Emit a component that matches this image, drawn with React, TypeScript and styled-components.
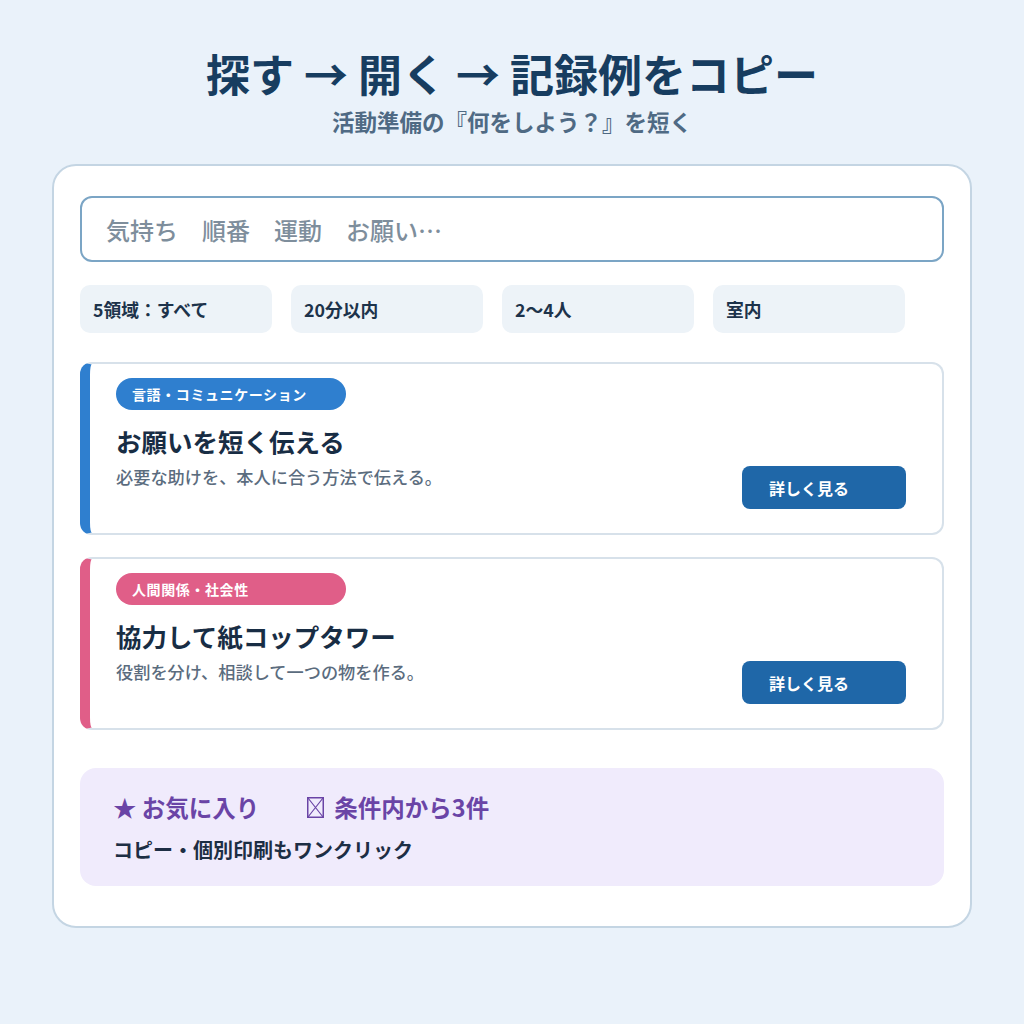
import React from "react";
import styled, { createGlobalStyle } from "styled-components";

const GlobalStyle = createGlobalStyle`
  html, body {
    margin: 0;
    padding: 0;
    background: #eaf2fa;
  }
  body {
    font-family: "Noto Sans CJK JP", "Noto Sans", sans-serif;
  }
`;

const Page = styled.div`
  width: 1024px;
  height: 1024px;
  box-sizing: border-box;
  padding-top: 45px;
  display: flex;
  flex-direction: column;
  align-items: center;
`;

const Title = styled.h1`
  margin: 0;
  font-size: 44px;
  line-height: 56px;
  font-weight: 700;
  color: #173d60;
`;

const Subtitle = styled.p`
  margin: 6px 0 0;
  font-size: 22.5px;
  line-height: 28px;
  font-weight: 700;
  color: #4f6a84;
`;

const Panel = styled.section`
  margin-top: 29px;
  width: 920px;
  height: 764px;
  box-sizing: border-box;
  background: #ffffff;
  border: 2px solid #c4d5e3;
  border-radius: 24px;
  padding: 30px 26px 0;
  display: flex;
  flex-direction: column;
`;

const Search = styled.div`
  height: 66px;
  box-sizing: border-box;
  border: 2.5px solid #7ba5c5;
  border-radius: 12px;
  padding: 0 24px;
  display: flex;
  align-items: center;
  gap: 24px;
  font-size: 24px;
  font-weight: 500;
  color: #7e8e9c;
`;

const Filters = styled.div`
  margin-top: 23px;
  display: grid;
  grid-template-columns: repeat(4, 192px);
  gap: 19px;
`;

const Chip = styled.div`
  height: 48px;
  border-radius: 10px;
  background: #edf3f8;
  display: flex;
  align-items: center;
  padding-left: 13px;
  font-size: 17.8px;
  font-weight: 700;
  color: #1d334b;
`;

const Cards = styled.div`
  margin-top: 29px;
  display: flex;
  flex-direction: column;
  gap: 22px;
`;

const Card = styled.article<{ accent: string }>`
  height: 173px;
  box-sizing: border-box;
  border: 2px solid #d7e1ea;
  border-left: 10px solid ${(p) => p.accent};
  border-radius: 12px;
  padding: 14px 36px 24px 26px;
  display: flex;
  align-items: flex-end;
`;

const CardBody = styled.div`
  align-self: flex-start;
  display: flex;
  flex-direction: column;
  align-items: flex-start;
`;

const Tag = styled.span<{ bg: string }>`
  width: 230px;
  height: 32px;
  box-sizing: border-box;
  border-radius: 16px;
  background: ${(p) => p.bg};
  color: #ffffff;
  font-size: 14px;
  font-weight: 700;
  letter-spacing: 0.6px;
  padding-left: 16px;
  display: flex;
  align-items: center;
`;

const CardTitle = styled.h2`
  margin: 13px 0 0;
  font-size: 25.5px;
  line-height: 36px;
  font-weight: 700;
  color: #182d44;
`;

const CardText = styled.p`
  margin: 5px 0 0;
  font-size: 17.2px;
  line-height: 26px;
  font-weight: 500;
  color: #5b6c7e;
`;

const MoreButton = styled.button`
  margin-left: auto;
  width: 164px;
  height: 43px;
  border: none;
  border-radius: 8px;
  background: #1f67a8;
  color: #ffffff;
  font-family: inherit;
  font-size: 16px;
  font-weight: 700;
  text-align: left;
  padding-left: 27px;
`;

const Promo = styled.div`
  margin-top: 38px;
  height: 118px;
  box-sizing: border-box;
  border-radius: 16px;
  background: #f0ebfc;
  padding: 23px 33px;
  display: flex;
  flex-direction: column;
  gap: 12px;
`;

const PromoRow = styled.div`
  display: flex;
  align-items: center;
  gap: 48px;
  font-size: 23.5px;
  line-height: 32px;
  font-weight: 700;
  color: #6a44a6;
`;

const PromoItem = styled.span`
  display: inline-flex;
  align-items: center;
  gap: 10px;
`;

const PromoNote = styled.div`
  font-size: 20px;
  line-height: 30px;
  font-weight: 700;
  color: #1d2e44;
`;

const BoxMark = () => (
  <svg width="17" height="21" viewBox="0 0 17 21" fill="none">
    <rect x="0.75" y="0.75" width="15.5" height="19.5" stroke="#6a44a6" strokeWidth="1.5" />
    <path d="M1 1L16 20M16 1L1 20" stroke="#6a44a6" strokeWidth="1.2" />
  </svg>
);

const activities = [
  {
    id: 1,
    tag: "言語・コミュニケーション",
    color: "#2f7fcf",
    title: "お願いを短く伝える",
    text: "必要な助けを、本人に合う方法で伝える。",
  },
  {
    id: 2,
    tag: "人間関係・社会性",
    color: "#e05e88",
    title: "協力して紙コップタワー",
    text: "役割を分け、相談して一つの物を作る。",
  },
];

const filters = ["5領域：すべて", "20分以内", "2〜4人", "室内"];

const App = () => {
  return (
    <Page>
      <GlobalStyle />
      <Title>探す → 開く → 記録例をコピー</Title>
      <Subtitle>活動準備の『何をしよう？』を短く</Subtitle>
      <Panel>
        <Search>
          <span>気持ち</span>
          <span>順番</span>
          <span>運動</span>
          <span>お願い…</span>
        </Search>
        <Filters>
          {filters.map((f) => (
            <Chip key={f}>{f}</Chip>
          ))}
        </Filters>
        <Cards>
          {activities.map((a) => (
            <Card key={a.id} accent={a.color}>
              <CardBody>
                <Tag bg={a.color}>{a.tag}</Tag>
                <CardTitle>{a.title}</CardTitle>
                <CardText>{a.text}</CardText>
              </CardBody>
              <MoreButton>詳しく見る</MoreButton>
            </Card>
          ))}
        </Cards>
        <Promo>
          <PromoRow>
            <PromoItem>★ お気に入り</PromoItem>
            <PromoItem>
              <BoxMark />
              条件内から3件
            </PromoItem>
          </PromoRow>
          <PromoNote>コピー・個別印刷もワンクリック</PromoNote>
        </Promo>
      </Panel>
    </Page>
  );
};

export default App;
